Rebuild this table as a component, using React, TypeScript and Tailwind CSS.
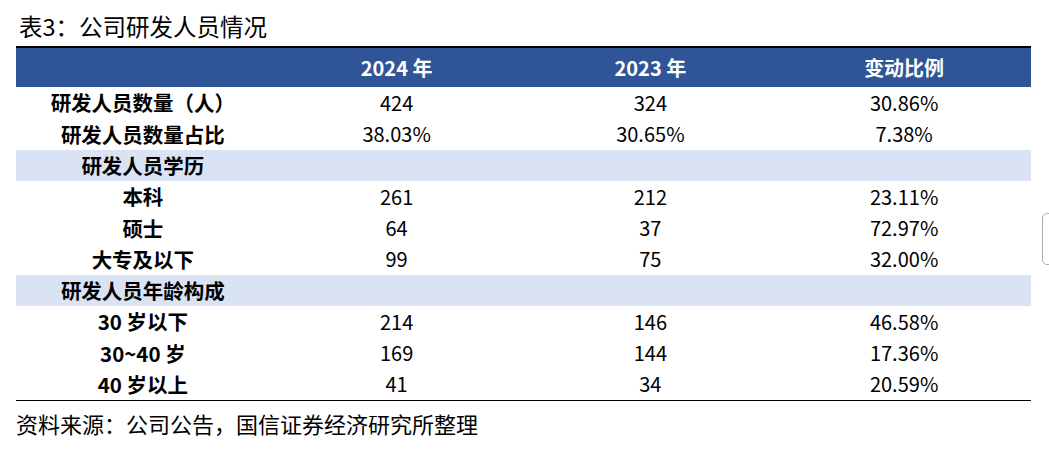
import React from "react";

interface Row {
  label: string;
  values?: [string, string, string];
  section?: boolean;
}

const rows: Row[] = [
  { label: "研发人员数量（人）", values: ["424", "324", "30.86%"] },
  { label: "研发人员数量占比", values: ["38.03%", "30.65%", "7.38%"] },
  { label: "研发人员学历", section: true },
  { label: "本科", values: ["261", "212", "23.11%"] },
  { label: "硕士", values: ["64", "37", "72.97%"] },
  { label: "大专及以下", values: ["99", "75", "32.00%"] },
  { label: "研发人员年龄构成", section: true },
  { label: "30 岁以下", values: ["214", "146", "46.58%"] },
  { label: "30~40 岁", values: ["169", "144", "17.36%"] },
  { label: "40 岁以上", values: ["41", "34", "20.59%"] },
];

const cjk = { fontFamily: '"Noto Sans CJK SC", "Liberation Sans", sans-serif' };

export default function App() {
  return (
    <div className="relative w-[1049px] h-[456px] bg-white text-black overflow-hidden" style={cjk}>
      <div className="h-[46px] pl-[19px] pt-[12px] text-[23.5px] leading-[28px]">表3：公司研发人员情况</div>

      <div className="ml-[16px] w-[1015px] border-t-[2px] border-black">
        <div className="grid grid-cols-4 h-[39px] bg-[#2f5597] text-white font-bold text-[20px] items-center text-center">
          <div></div>
          <div>2024 年</div>
          <div>2023 年</div>
          <div>变动比例</div>
        </div>

        {rows.map((row) => (
          <div
            key={row.label}
            className={`grid grid-cols-4 h-[31.3px] items-center text-center ${
              row.section ? "bg-[#dae3f3]" : ""
            }`}
          >
            <div className="font-bold text-[20.5px] leading-none">{row.label}</div>
            {row.values ? (
              row.values.map((v, i) => (
                <div key={i} className="text-[20px] leading-none">
                  {v}
                </div>
              ))
            ) : (
              <>
                <div></div>
                <div></div>
                <div></div>
              </>
            )}
          </div>
        ))}
        <div className="border-t border-black"></div>
      </div>

      <div className="pl-[16px] pt-[8px] text-[22px] leading-[28px]">资料来源：公司公告，国信证券经济研究所整理</div>

      <div className="absolute left-[1042px] top-[213px] w-[14px] h-[52px] rounded-[5px] border border-[#b0b0b0]"></div>
    </div>
  );
}
